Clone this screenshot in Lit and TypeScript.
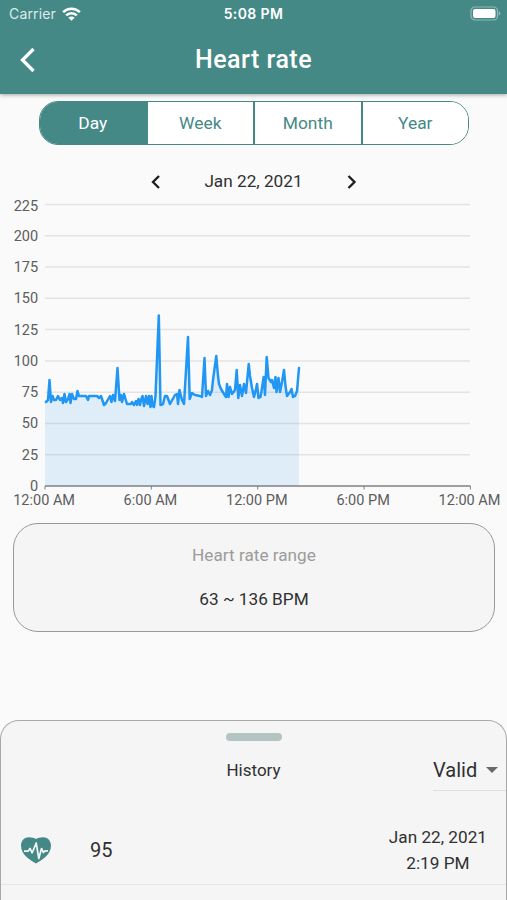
import { LitElement, html, svg, css } from "lit";
import { customElement, state } from "lit/decorators.js";
import { classMap } from "lit/directives/class-map.js";

const TRACE = `46,402 48,400 49.5,380 51,402 52.5,396 54,400 56,400 58,396 60,400 62,398 63,403 64.5,394 66,402 68,399 69.5,394 70.5,403 72,394 74,399 76,399 77.5,391 79,396 86,396 88,400 89,396 97,396 99,398 101,396 104,405 106,403 110,396 111.5,402 113,395 115,401 117.5,368 119.5,400 121,395 122,402 124,394 127,404 131,404 132,402 134,405 136,401 137,405 138.5,399 140,405 141,400 142.5,396 144,406 146,396 147.5,404 149,396 150.5,407 151.5,396 152.5,406 154,407 155.5,396 158.8,315.5 160.5,405 163,404 165,396 167,396 170,404 175,395 177,394 178,404 179.5,390 182,400 184,404 188,337 189.7,399 192,393 195,395 200,396 202,397 204.5,358 206,396 208,391 210,395 212,390 213,380 216.3,356 218,376 219,384 221,389 224,394 226,397 227,384 228.5,397 230,387 232,394 235,390 236.7,370 238.3,398 240,385 242,396 244,384 246,393 248.7,364 250,376 252,388 254,397 256,389 257,384 258.5,398 260.5,397 262,388 263.7,377 265,395 266.7,357 268.5,378 271,382 272,380 274,388 275.5,377 276.5,392 278.5,378 280,392 282,382 284,370 285.5,386 287,396 290,392 291.5,389 293,397 295,396 297,391 299,368`;

const LEVELS = [225, 200, 175, 150, 125, 100, 75, 50, 25, 0];
const HOURS = ["12:00 AM", "6:00 AM", "12:00 PM", "6:00 PM", "12:00 AM"];
const yOf = (bpm: number) => 486 - bpm * 1.2511;
const xOf = (i: number) => 45 + i * 106.35;

@customElement("heart-chart")
export class HeartChart extends LitElement {
  static styles = css`
    :host { display: block; height: 314px; }
    .plot { display: block; }
    .label { font: 14.5px Roboto, sans-serif; fill: #5d5d5d; }
    .level { text-anchor: end; }
    .hour { text-anchor: middle; }
    .grid { stroke: #e3e3e3; stroke-width: 1.5; }
    .area { fill: rgba(33, 150, 243, 0.12); }
    .line { fill: none; stroke: #2196f3; stroke-width: 2.5; stroke-linejoin: round; stroke-linecap: round; }
    .axis { stroke: #7d8284; stroke-width: 1.7; }
    .tick { stroke: #7d8284; stroke-width: 1; }
  `;
  render() {
    return html`<svg class="plot" width="507" height="314" viewBox="0 196 507 314">
      ${LEVELS.slice(0, -1).map((v) => svg`<line class="grid" x1="45" x2="470" y1=${yOf(v)} y2=${yOf(v)} />`)}
      ${LEVELS.map((v) => svg`<text class="label level" x="38.1" y=${v === 225 ? 211.3 : yOf(v) + 5}>${v}</text>`)}
      <polygon class="area" points="45,486 45,402 ${TRACE} 299,486" />
      <polyline class="line" points=${TRACE} />
      <line class="axis" x1="45" x2="470.5" y1="486" y2="486" />
      ${HOURS.map((h, i) => svg`<line class="tick" x1=${xOf(i)} x2=${xOf(i)} y1="486" y2="489.5" /><text class="label hour" x=${xOf(i) - 0.9} y="505.4">${h}</text>`)}
    </svg>`;
  }
}

@customElement("app-root")
export class AppRoot extends LitElement {
  @state() private range = "Day";

  static styles = css`
    :host { display: flex; flex-direction: column; width: 507px; height: 900px; overflow: hidden; background: #fafafa; color: #303030; font-family: Roboto, sans-serif; }
    * { box-sizing: border-box; }
    .header { flex: none; height: 94px; background: #458986; color: #fff; box-shadow: 0 1px 4px rgba(0, 0, 0, 0.35); }
    .status { display: grid; grid-template-columns: 1fr auto 1fr; align-items: center; height: 27px; padding: 0 6px 0 9px; font: 14px Inter, sans-serif; }
    .carrier { display: flex; align-items: center; gap: 6px; color: #dcebea; letter-spacing: 0.15px; }
    .clock { font-weight: 600; font-size: 14px; letter-spacing: 0.4px; padding-right: 3px; }
    .battery { justify-self: end; }
    .bar { display: grid; grid-template-columns: 60px 1fr 60px; align-items: center; height: 65px; }
    .back { margin-left: 19px; display: block; }
    .title { text-align: center; font-size: 25px; font-weight: 500; letter-spacing: 0.5px; }
    .tabs { flex: none; display: flex; width: 430px; height: 44px; margin: 7px 0 0 39px; border: 1.5px solid #458986; border-radius: 19px; overflow: hidden; background: #fff; }
    .tab { flex: 1; display: grid; place-items: center; padding: 0; border: 0; border-left: 2.5px solid #458986; background: #fff; color: #458986; font: 17.4px Roboto, sans-serif; }
    .tab:first-child { border-left: 0; }
    .tab.on { background: #458986; color: #fff; }
    .date { flex: none; display: flex; justify-content: center; align-items: center; gap: 43px; height: 51px; padding-top: 22px; font-size: 17.2px; }
    .date span { margin-top: -1px; }
    .chev { display: block; }
    .summary { flex: none; display: flex; flex-direction: column; align-items: center; gap: 22px; width: 482px; height: 109px; margin: 13px 0 0 13px; padding-top: 20px; border: 1.4px solid #999; border-radius: 25px; background: #f5f5f5; font-size: 17.2px; line-height: 22px; }
    .caption { color: #9c9c9c; }
    .sheet { flex: 1; display: flex; flex-direction: column; margin-top: 88px; border: 1px solid #a8a8a8; border-bottom: 0; border-radius: 19px 19px 0 0; background: #f5f5f5; }
    .grip { flex: none; align-self: center; width: 56px; height: 8px; margin-top: 12px; border-radius: 4px; background: #b3c5c2; }
    .head { display: grid; grid-template-columns: 1fr auto 1fr; align-items: center; height: 50px; }
    .history { grid-column: 2; font-size: 17px; padding-top: 8px; }
    .filter { justify-self: end; display: flex; align-items: center; gap: 9px; width: 73px; height: 41px; margin-top: 9px; border-bottom: 1px solid #dedede; font-size: 20px; }
    .entry { display: flex; align-items: center; height: 94px; padding: 25px 19px 0 20px; border-bottom: 1px solid #e7e7e7; }
    .value { margin-left: 39px; font-size: 20px; flex: 1; }
    .when { font-size: 17.2px; line-height: 26px; text-align: center; }
  `;

  render() {
    return html`
      <header class="header">
        <div class="status">
          <div class="carrier">Carrier
            <svg width="19" height="14" viewBox="0 0 19 14">
              <g fill="none" stroke="#fff" stroke-width="2.5"><path d="M1.1 5.2a12 12 0 0 1 16.8 0" /><path d="M4.1 8.4a7.7 7.7 0 0 1 10.8 0" /></g>
              <path d="M6.4 10.7a4.4 4.4 0 0 1 6.2 0L9.5 13.8z" fill="#fff" />
            </svg>
          </div>
          <div class="clock">5:08 PM</div>
          <svg class="battery" width="31" height="15" viewBox="0 0 31 15">
            <rect x="1" y="1" width="26.5" height="13" rx="4" fill="none" stroke="#8fb9b7" stroke-width="1.2" />
            <rect x="3" y="3" width="22.5" height="9" rx="2" fill="#fff" />
            <path d="M28.7 5.2q1.7.7 1.7 2.3t-1.7 2.3z" fill="#8fb9b7" />
          </svg>
        </div>
        <div class="bar">
          <svg class="back" width="18" height="26" viewBox="0 0 18 26"><path d="M14.5 2L3.5 13l11 11" fill="none" stroke="#fff" stroke-width="3.3" /></svg>
          <div class="title">Heart rate</div>
        </div>
      </header>
      <nav class="tabs">
        ${["Day", "Week", "Month", "Year"].map((t) => html`<button class=${classMap({ tab: true, on: this.range === t })} @click=${() => (this.range = t)}>${t}</button>`)}
      </nav>
      <div class="date">
        <svg class="chev" width="12" height="16" viewBox="0 0 12 16"><path d="M10 2L4 8l6 6" fill="none" stroke="#1c1c1c" stroke-width="2.3" /></svg>
        <span>Jan 22, 2021</span>
        <svg class="chev" width="12" height="16" viewBox="0 0 12 16"><path d="M2.5 2l6 6-6 6" fill="none" stroke="#1c1c1c" stroke-width="2.3" /></svg>
      </div>
      <heart-chart></heart-chart>
      <section class="summary">
        <div class="caption">Heart rate range</div>
        <div>63 ~ 136 BPM</div>
      </section>
      <section class="sheet">
        <div class="grip"></div>
        <div class="head">
          <div class="history">History</div>
          <div class="filter">Valid
            <svg width="12" height="6" viewBox="0 0 12 6"><path d="M0 0h12L6 6z" fill="#6a6a6a" /></svg>
          </div>
        </div>
        <div class="entry">
          <svg width="30" height="27" viewBox="0 0 30 27">
            <path d="M15 26.5C10 23.6 0 18 0 8.8 0 3.5 3.5.3 7.8.3 11 .3 13.5 1 15 2.1 16.5 1 19 .3 22.2.3 26.5.3 30 3.5 30 8.8 30 18 20 23.6 15 26.5z" fill="#458986" />
            <path d="M3 14.2h4l2-2.7 2.2 4.3L15.2 6l2.6 15.5L20.5 11.500l2 4 1.600-1.700H27" fill="none" stroke="#f5f5f5" stroke-width="1.7" stroke-linejoin="round" />
          </svg>
          <div class="value">95</div>
          <div class="when">Jan 22, 2021<br />2:19 PM</div>
        </div>
      </section>
    `;
  }
}
